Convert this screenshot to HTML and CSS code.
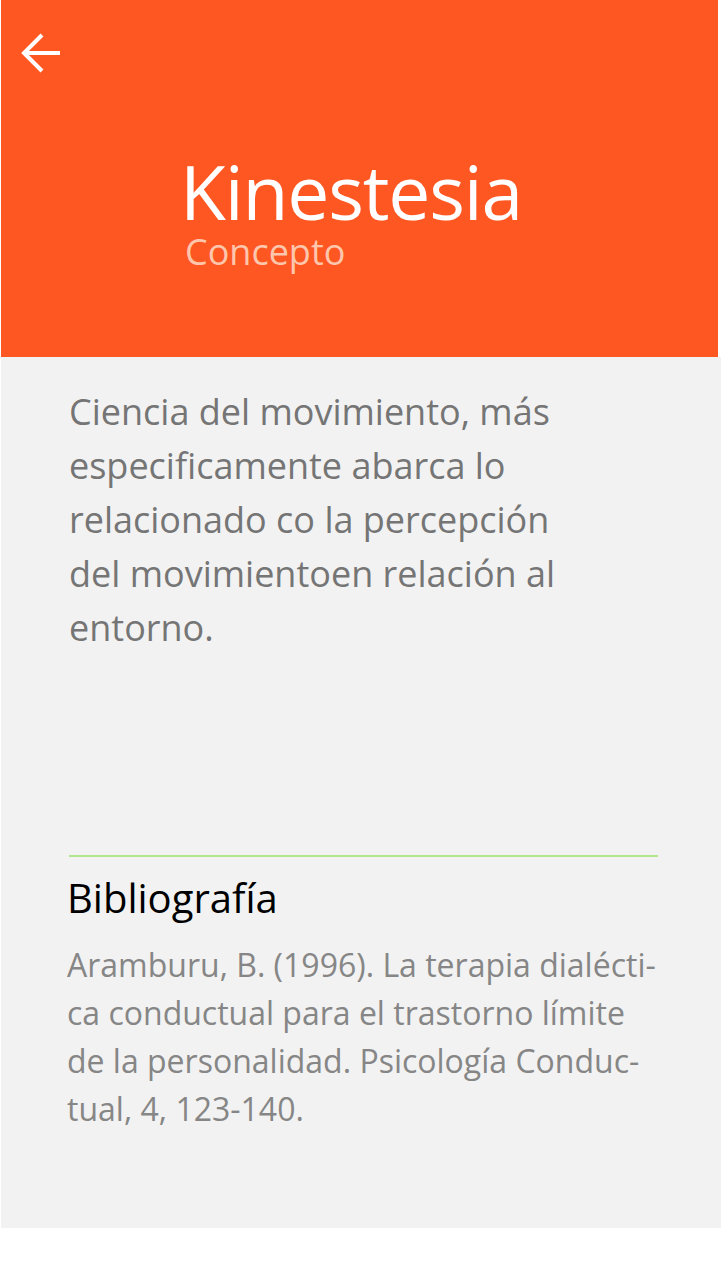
FILE: index.html
```html
<!DOCTYPE html>
<html lang="es">
<head>
<meta charset="utf-8">
<link rel="stylesheet" href="styles.css">
</head>
<body>
<div class="page">
  <header class="hero">
    <button class="back" aria-label="Volver">
      <svg width="42" height="40" viewBox="0 0 42 40"><path d="M40 20H4M22 2L4 20L22 38" fill="none" stroke="#fff" stroke-width="4"/></svg>
    </button>
    <div class="titles">
      <h1 class="title">Kinestesia</h1>
      <div class="subtitle">Concepto</div>
    </div>
  </header>
  <main class="content">
    <p class="definition">Ciencia del movimiento, más<br>especificamente abarca lo<br>relacionado co la percepción<br>del movimientoen relación al<br>entorno.</p>
    <hr class="divider">
    <h2 class="bib-title">Bibliografía</h2>
    <p class="bib-text">Aramburu, B. (1996). La terapia dialécti-<br>ca conductual para el trastorno límite<br>de la personalidad. Psicología Conduc-<br>tual, 4, 123-140.</p>
  </main>
</div>
</body>
</html>
```
FILE: styles.css
```css
html, body { margin: 0; padding: 0; background: #fff; }
body { font-family: "Open Sans", "Noto Sans", sans-serif; }
.page { padding-left: 1px; }
.hero {
  width: 717px; height: 357px; background: #ff5722;
  box-sizing: border-box; padding: 33px 0 0 19px;
  display: flex; flex-direction: column;
}
.back { background: none; border: 0; padding: 0; width: 42px; height: 40px; cursor: pointer; align-self: flex-start; }
.back svg { display: block; }
.titles { margin: 82px 0 0 160px; }
.title { margin: 0; font-weight: 400; color: #fff; font-size: 75px; line-height: 72px; letter-spacing: -1.2px; }
.subtitle { margin: 6px 0 0 5px; color: #fdc6ad; font-size: 36px; line-height: 38px; }
.content {
  width: 720px; height: 871px; background: #f2f2f2; box-sizing: border-box;
  padding: 28px 64px 0 66px;
}
.definition { margin: 0 0 0 2px; color: #757575; font-size: 36px; line-height: 54px; }
.divider { border: 0; height: 2px; background: #b2e68e; margin: 200px 0 0 2px; width: 589px; }
.bib-title { margin: 14px 0 0 0; font-weight: 400; color: #000; font-size: 40px; line-height: 54px; }
.bib-text { margin: 16px 0 0 0; color: #868686; font-size: 32px; line-height: 48px; white-space: nowrap; }
```
